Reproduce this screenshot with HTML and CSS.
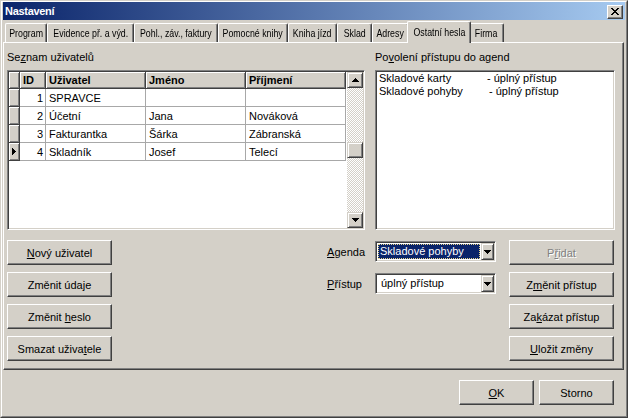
FILE: index.html
```html
<!DOCTYPE html>
<html lang="cs">
<head>
<meta charset="utf-8">
<title>Nastavení</title>
<link rel="stylesheet" href="styles.css">
</head>
<body>
<div class="window">
  <div class="frame">
    <div class="titlebar">
      <span class="title">Nastavení</span>
      <div class="close">
        <svg width="8" height="7" viewBox="0 0 8 7" shape-rendering="crispEdges"><path d="M0 0h2v1h-2z M6 0h2v1h-2z M1 1h2v1h-2z M5 1h2v1h-2z M2 2h4v1h-4z M3 3h2v1h-2z M2 4h4v1h-4z M1 5h2v1h-2z M5 5h2v1h-2z M0 6h2v1h-2z M6 6h2v1h-2z" fill="#000"/></svg>
      </div>
    </div>

    <div class="tabs">
      <div class="tab w-program"><span class="tt">Program</span></div>
      <div class="tab w-evidence"><span class="tt">Evidence př. a výd.</span></div>
      <div class="tab w-pohl"><span class="tt">Pohl., záv., faktury</span></div>
      <div class="tab w-pomocne"><span class="tt">Pomocné knihy</span></div>
      <div class="tab w-kniha"><span class="tt">Kniha jízd</span></div>
      <div class="tab w-sklad"><span class="tt">Sklad</span></div>
      <div class="tab w-adresy"><span class="tt">Adresy</span></div>
      <div class="tab active w-ostatni"><span class="tt">Ostatní hesla</span></div>
      <div class="tab w-firma"><span class="tt">Firma</span></div>
    </div>

    <div class="panel">
      <div class="top">
        <div class="col-left">
          <div class="label">Se<u>z</u>nam uživatelů</div>
          <div class="grid sunken">
            <div class="table">
              <div class="hc"></div>
              <div class="hc"><span>ID</span></div>
              <div class="hc"><span>Uživatel</span></div>
              <div class="hc"><span>Jméno</span></div>
              <div class="hc"><span>Příjmení</span></div>

              <div class="ind"></div>
              <div class="dc num"><span>1</span></div>
              <div class="dc"><span>SPRAVCE</span></div>
              <div class="dc"></div>
              <div class="dc"></div>

              <div class="ind"></div>
              <div class="dc num"><span>2</span></div>
              <div class="dc"><span>Účetní</span></div>
              <div class="dc"><span>Jana</span></div>
              <div class="dc"><span>Nováková</span></div>

              <div class="ind"></div>
              <div class="dc num"><span>3</span></div>
              <div class="dc"><span>Fakturantka</span></div>
              <div class="dc"><span>Šárka</span></div>
              <div class="dc"><span>Zábranská</span></div>

              <div class="ind current"><svg width="4" height="7" viewBox="0 0 4 7" shape-rendering="crispEdges"><path d="M0 0h1v1h1v1h1v1h1v1H3v1H2v1H1v1H0z" fill="#000"/></svg></div>
              <div class="dc num"><span>4</span></div>
              <div class="dc"><span>Skladník</span></div>
              <div class="dc"><span>Josef</span></div>
              <div class="dc"><span>Telecí</span></div>
            </div>
            <div class="vscroll">
              <div class="sb-btn"><svg width="7" height="4" viewBox="0 0 7 4" shape-rendering="crispEdges"><path d="M3 0h1v1h1v1h1v1h1v1H0V3h1V2h1V1h1z" fill="#000"/></svg></div>
              <div class="track"><div class="thumb"></div></div>
              <div class="sb-btn"><svg width="7" height="4" viewBox="0 0 7 4" shape-rendering="crispEdges"><path d="M0 0h7v1H6v1H5v1H4v1H3V3H2V2H1V1H0z" fill="#000"/></svg></div>
            </div>
          </div>
        </div>
        <div class="col-right">
          <div class="label">Po<u>v</u>olení přístupu do agend</div>
          <div class="listbox sunken">
            <div class="item"><span class="name">Skladové karty</span>- úplný přístup</div>
            <div class="item"><span class="name wide">Skladové pohyby</span>- úplný přístup</div>
          </div>
        </div>
      </div>

      <div class="bottom">
        <div class="btn c1"><span><u>N</u>ový uživatel</span></div>
        <div class="flabel c3"><span><u>A</u>genda</span></div>
        <div class="combo sunken c4">
          <div class="combo-text"><span class="sel">Skladové pohyby</span></div>
          <div class="combo-btn"><svg width="7" height="4" viewBox="0 0 7 4" shape-rendering="crispEdges"><path d="M0 0h7v1H6v1H5v1H4v1H3V3H2V2H1V1H0z" fill="#000"/></svg></div>
        </div>
        <div class="btn disabled c5"><span>P<u>ř</u>idat</span></div>

        <div class="btn c1"><span>Změnit úda<u>j</u>e</span></div>
        <div class="flabel c3"><span><u>P</u>řístup</span></div>
        <div class="combo sunken c4">
          <div class="combo-text"><span class="plain">úplný přístup</span></div>
          <div class="combo-btn"><svg width="7" height="4" viewBox="0 0 7 4" shape-rendering="crispEdges"><path d="M0 0h7v1H6v1H5v1H4v1H3V3H2V2H1V1H0z" fill="#000"/></svg></div>
        </div>
        <div class="btn c5"><span>Z<u>m</u>ěnit přístup</span></div>

        <div class="btn c1"><span>Změnit <u>h</u>eslo</span></div>
        <div class="btn c5"><span>Za<u>k</u>ázat přístup</span></div>

        <div class="btn c1"><span>Smazat uživa<u>t</u>ele</span></div>
        <div class="btn c5"><span><u>U</u>ložit změny</span></div>
      </div>
    </div>

    <div class="footer">
      <div class="btn w75"><span><u>O</u>K</span></div>
      <div class="btn w75"><span>Storno</span></div>
    </div>
  </div>
</div>
</body>
</html>
```

FILE: styles.css
```css
* { box-sizing: border-box; }
html, body { margin: 0; padding: 0; }
body {
  width: 628px;
  height: 418px;
  overflow: hidden;
  background: #D4D0C8;
  font-family: "Liberation Sans", Arial, sans-serif;
  font-size: 11px;
  color: #000;
}
u { text-decoration: underline; text-underline-offset: 1px; }

.window {
  width: 628px;
  height: 418px;
  border: 1px solid;
  border-color: #D4D0C8 #404040 #404040 #D4D0C8;
}
.frame {
  height: 100%;
  border: 1px solid;
  border-color: #fff #808080 #808080 #fff;
  padding: 0 1px 1px 1px;
  display: flex;
  flex-direction: column;
}

/* title bar */
.titlebar {
  height: 18px;
  flex: none;
  display: flex;
  align-items: center;
  justify-content: space-between;
  padding-left: 2px;
  background: linear-gradient(to right, #0A246A, #A6CAF0);
}
.title { color: #fff; font-weight: bold; letter-spacing: -0.3px; }
.close {
  width: 16px;
  height: 14px;
  margin-right: 2px;
  margin-top: 1px;
  background: #D4D0C8;
  border: 1px solid;
  border-color: #fff #404040 #404040 #fff;
  box-shadow: inset -1px -1px #808080;
  display: flex;
  align-items: center;
  justify-content: center;
}

/* tabs */
.tabs {
  height: 22px;
  flex: none;
  display: flex;
  align-items: flex-end;
  padding-left: 2px;
  position: relative;
  z-index: 1;
}
.tab {
  height: 19px;
  flex: none;
  border: 1px solid;
  border-bottom: 0;
  border-color: #fff #404040 #fff #fff;
  border-radius: 2px 2px 0 0;
  box-shadow: inset -1px 0 #808080;
  background: #D4D0C8;
  display: flex;
  align-items: center;
  justify-content: center;
  white-space: nowrap;
}
.tt {
  display: inline-block;
  flex: none;
  white-space: nowrap;
  transform: scaleX(0.8);
}
.tab.active {
  height: 22px;
  margin: 0 -2px -1px;
  padding-bottom: 2px;
  position: relative;
  z-index: 2;
}
.w-program { width: 42px; }
.w-evidence { width: 87px; }
.w-pohl { width: 84px; }
.w-pomocne { width: 70px; }
.w-kniha { width: 49px; }
.w-sklad { width: 35px; }
.w-adresy { width: 37px; }
.w-ostatni { width: 64px; }
.w-firma { width: 35px; }

/* panel */
.panel {
  height: 328px;
  flex: none;
  margin-right: 1px;
  border: 1px solid;
  border-color: #fff #404040 #404040 #fff;
  box-shadow: inset -1px -1px #808080;
  padding: 8px 0 0 3px;
}
.top { display: flex; gap: 10px; }
.col-left { width: 358px; }
.col-right { width: 240px; }
.label { height: 13px; line-height: 13px; margin-bottom: 6px; white-space: nowrap; }

.sunken {
  border: 1px solid;
  border-color: #808080 #fff #fff #808080;
  box-shadow: inset 1px 1px #404040, inset -1px -1px #D4D0C8;
  padding: 1px;
  background: #fff;
}

/* grid */
.grid { height: 160px; display: flex; }
.table {
  flex: 1;
  display: grid;
  grid-template-columns: 11px 26px 100px 100px 100px;
  grid-template-rows: 17px repeat(4, 18px);
  align-content: start;
  background: #fff;
}
.hc, .ind {
  background: #D4D0C8;
  border-right: 1px solid #404040;
  border-bottom: 1px solid #404040;
  box-shadow: inset 1px 1px #fff, inset -1px -1px #808080;
}
.hc {
  font-weight: bold;
  padding-left: 3px;
  display: flex;
  align-items: center;
  white-space: nowrap;
}
.ind { display: flex; align-items: center; justify-content: center; }
.dc {
  border-right: 1px solid #A8A8A8;
  border-bottom: 1px solid #A8A8A8;
  padding-left: 3px;
  display: flex;
  align-items: center;
  white-space: nowrap;
}
.dc.num { justify-content: flex-end; padding: 0 2px 0 0; }

.vscroll { width: 16px; flex: none; display: flex; flex-direction: column; }
.sb-btn, .thumb, .combo-btn {
  background: #D4D0C8;
  border: 1px solid;
  border-color: #D4D0C8 #404040 #404040 #D4D0C8;
  box-shadow: inset 1px 1px #fff, inset -1px -1px #808080;
  display: flex;
  align-items: center;
  justify-content: center;
}
.sb-btn { height: 16px; flex: none; }
.track {
  flex: 1;
  background: repeating-conic-gradient(#fff 0% 25%, #D4D0C8 0% 50%) 0 0 / 2px 2px;
}
.thumb { height: 16px; margin-top: 54px; }

/* listbox */
.listbox { height: 160px; padding: 1px 3px; }
.item { line-height: 13px; white-space: nowrap; }
.item .name { display: inline-block; width: 108px; }
.item .name.wide { width: 110px; }

/* bottom controls */
.bottom {
  width: 607px;
  margin-top: 10px;
  display: grid;
  grid-template-columns: 105px 1fr auto 134px 105px;
  grid-template-rows: repeat(4, 25px);
  row-gap: 7px;
}
.c1 { grid-column: 1; }
.c3 { grid-column: 3; }
.c4 { grid-column: 4; }
.c5 { grid-column: 5; }

.btn {
  height: 25px;
  background: #D4D0C8;
  border: 1px solid;
  border-color: #fff #404040 #404040 #fff;
  box-shadow: inset -1px -1px #808080;
  display: flex;
  align-items: center;
  justify-content: center;
  white-space: nowrap;
}
.btn.disabled { color: #808080; text-shadow: 1px 1px 0 #fff; }
.w75 { width: 75px; }

.flabel {
  margin-right: 10px;
  margin-top: 1px;
  height: 21px;
  display: flex;
  align-items: center;
  white-space: nowrap;
}
.combo {
  width: 121px;
  height: 21px;
  margin-top: 1px;
  display: flex;
}
.combo-text { flex: 1; display: flex; padding: 1px; }
.sel {
  flex: 1;
  background: #0A246A;
  color: #fff;
  outline: 1px dotted #E6D48A;
  outline-offset: -1px;
  padding-left: 2px;
  line-height: 15px;
  white-space: nowrap;
}
.plain { padding-left: 3px; line-height: 15px; white-space: nowrap; }
.combo-btn { width: 13px; height: 17px; flex: none; }

/* footer */
.footer {
  flex: 1;
  display: flex;
  justify-content: flex-end;
  gap: 5px;
  padding: 10px 11px 0 0;
}
```
